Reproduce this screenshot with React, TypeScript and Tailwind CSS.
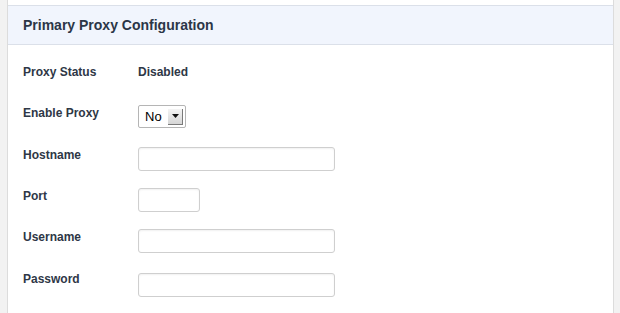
import * as React from "react";

const font = { fontFamily: '"Liberation Sans", Arial, Helvetica, sans-serif' };

function Label({ children }: { children: React.ReactNode }) {
  return (
    <div className="w-[115px] shrink-0 text-[12px] font-bold leading-4 text-[#2e3746]">
      {children}
    </div>
  );
}

function TextInput({
  width,
  type = "text",
  className = "",
}: {
  width: string;
  type?: string;
  className?: string;
}) {
  return (
    <input
      className={`${width} h-[24px] rounded-[3px] border border-[#cfcfcf] bg-white shadow-[inset_0_1px_2px_rgba(0,0,0,0.06)] outline-none ${className}`}
      type={type}
    />
  );
}

function LegacySelect() {
  return (
    <div className="flex h-[23px] w-[48px] items-center justify-between rounded-[2px] border border-[#b5b5b5] bg-white pr-[2px] pl-[6px]">
      <span className="text-[13px] leading-4 text-black">No</span>
      <span className="flex h-[16px] w-[15px] items-center justify-center border-r border-b border-[#7a7a7a] bg-gradient-to-b from-[#f4f4f4] to-[#d6d6d6]">
        <svg height="4" viewBox="0 0 7 4" width="7">
          <path d="M0 0h7L3.5 4z" fill="#111" />
        </svg>
      </span>
    </div>
  );
}

export default function App() {
  return (
    <div className="h-[313px] w-[620px] bg-[#f2f2f2] pr-[6px] pl-[7px]" style={font}>
      <div className="h-full border-x border-[#dcdcdc] bg-white pt-[5px]">
        <div className="flex h-[40px] items-center border-y border-[#dbe0e9] bg-[#f1f5fd] pl-[15px]">
          <h2 className="text-[14px] font-bold text-[#2b3647]">
            Primary Proxy Configuration
          </h2>
        </div>

        <div className="flex flex-col pl-[15px]">
          <div className="mt-[19px] flex items-start">
            <Label>Proxy Status</Label>
            <span className="text-[12px] font-bold leading-4 text-[#2e3746]">Disabled</span>
          </div>
          <div className="mt-[25px] flex items-start">
            <Label>Enable Proxy</Label>
            <LegacySelect />
          </div>
          <div className="mt-[19px] flex items-start">
            <Label>Hostname</Label>
            <TextInput width="w-[197px]" />
          </div>
          <div className="mt-[17px] flex items-start">
            <Label>Port</Label>
            <TextInput width="w-[62px]" />
          </div>
          <div className="mt-[17px] flex items-start">
            <Label>Username</Label>
            <TextInput width="w-[197px]" />
          </div>
          <div className="mt-[18px] flex items-start">
            <Label>Password</Label>
            <TextInput className="mt-[2px]" type="password" width="w-[197px]" />
          </div>
        </div>
      </div>
    </div>
  );
}
